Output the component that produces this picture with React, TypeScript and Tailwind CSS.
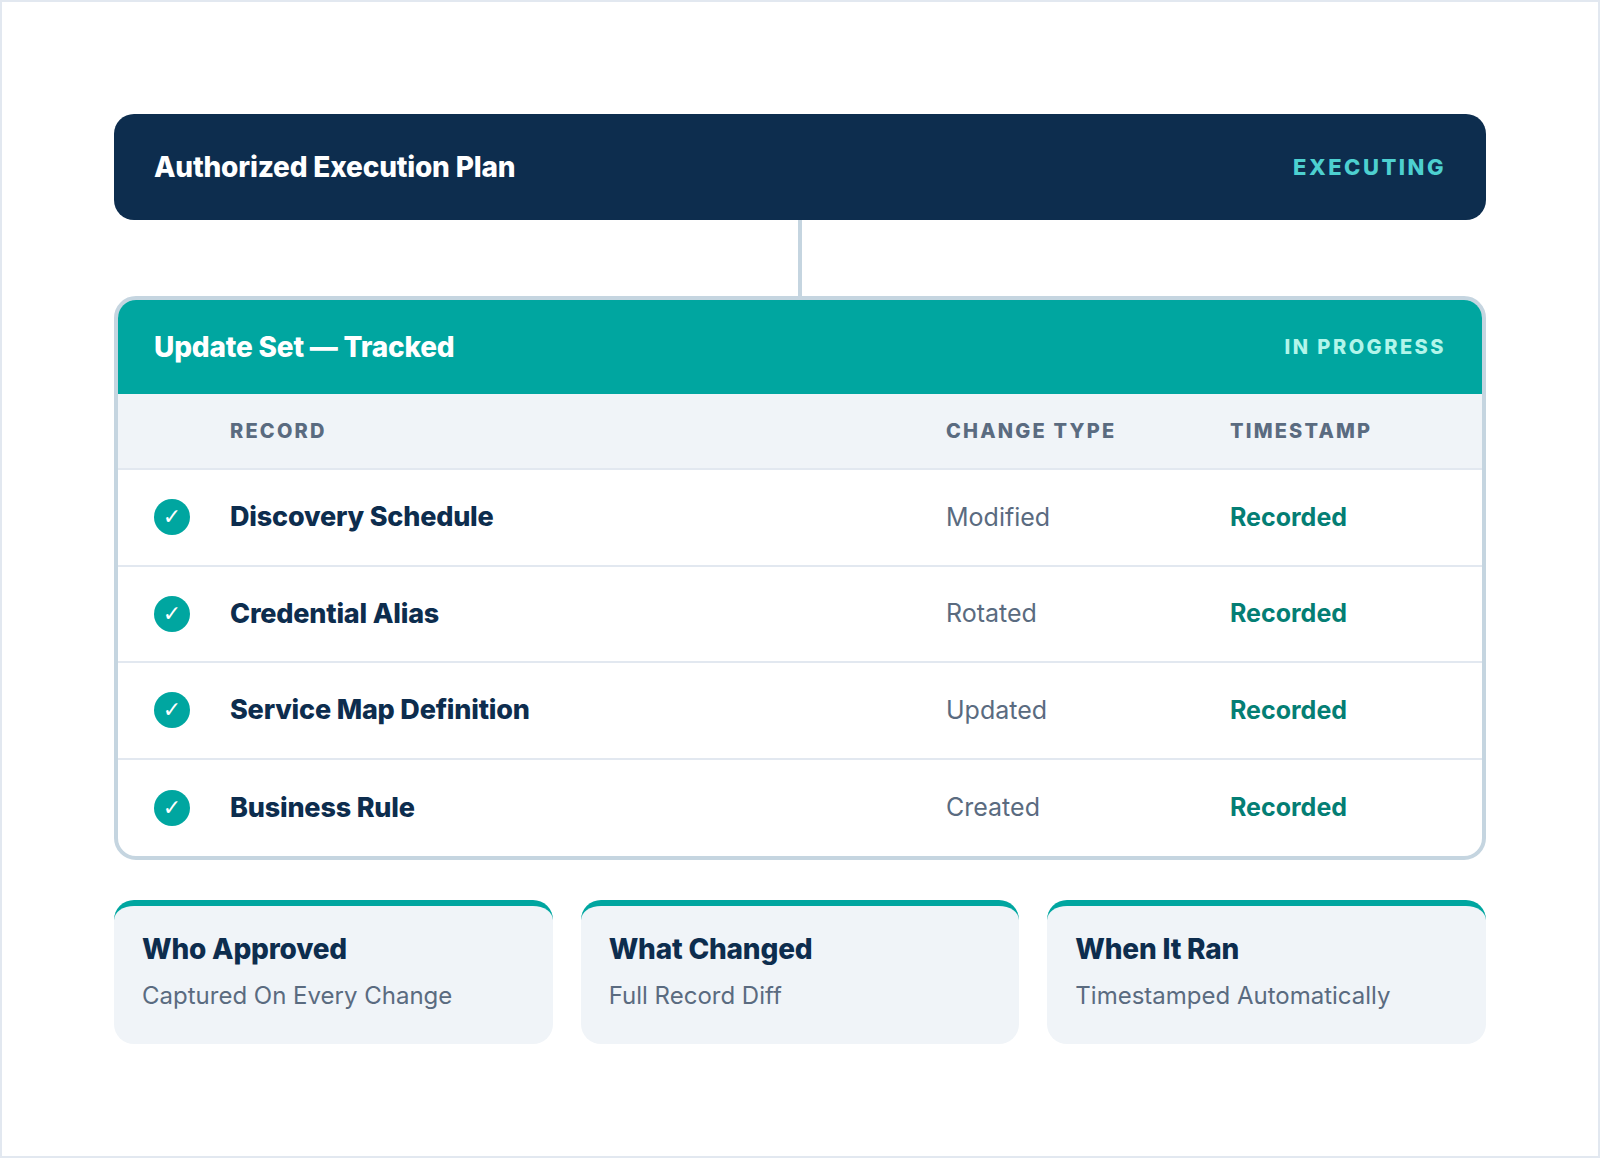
const rows = [
  { name: "Discovery Schedule", change: "Modified" },
  { name: "Credential Alias", change: "Rotated" },
  { name: "Service Map Definition", change: "Updated" },
  { name: "Business Rule", change: "Created" },
];

const notes = [
  { title: "Who Approved", text: "Captured On Every Change" },
  { title: "What Changed", text: "Full Record Diff" },
  { title: "When It Ran", text: "Timestamped Automatically" },
];

export default function App() {
  return (
    <div className="h-[1158px] border-2 border-[#e2e8f0] bg-white px-[112px] py-[112px] font-['Inter',sans-serif]">
      <div className="flex h-[106px] items-center justify-between rounded-[20px] bg-[#0d2d4e] px-10">
        <div className="text-[28px] font-extrabold tracking-[-0.2px] text-white">Authorized Execution Plan</div>
        <div className="text-[22px] font-extrabold tracking-[2.5px] text-[#4dd0d0]">EXECUTING</div>
      </div>

      <div className="mx-auto h-[76px] w-1 bg-[#c5d5e0]" />

      <div className="overflow-hidden rounded-[22px] border-4 border-[#c5d5e0]">
        <div className="flex h-[94px] items-center justify-between bg-[#00a6a0] pl-9 pr-9">
          <div className="text-[28px] font-extrabold tracking-[-0.2px] text-white">Update Set — Tracked</div>
          <div className="text-[20px] font-extrabold tracking-[2.5px] text-[#b2f5ea]">IN PROGRESS</div>
        </div>

        <div className="grid h-[76px] grid-cols-[76px_716px_284px_1fr] items-center border-b-2 border-[#e2e8f0] bg-[#f0f4f8] px-9 text-[20px] font-extrabold tracking-[2.2px] text-[#5a6b80]">
          <div />
          <div>RECORD</div>
          <div>CHANGE TYPE</div>
          <div>TIMESTAMP</div>
        </div>

        {rows.map((row, i) => (
          <div
            key={row.name}
            className={`grid h-[96.5px] grid-cols-[76px_716px_284px_1fr] items-center px-9 ${i < 3 ? "border-b-2 border-[#e2e8f0]" : ""}`}
          >
            <div className="flex h-9 w-9 items-center justify-center rounded-full bg-[#00a6a0] font-['DejaVu_Sans',sans-serif] text-[22px] font-bold leading-none text-white">
              ✓
            </div>
            <div className="text-[27px] font-extrabold tracking-[-0.2px] text-[#0d2d4e]">{row.name}</div>
            <div className="text-[25px] text-[#5a6b80]">{row.change}</div>
            <div className="text-[25px] font-bold text-[#047e74]">Recorded</div>
          </div>
        ))}
      </div>

      <div className="mt-10 grid grid-cols-3 gap-7">
        {notes.map((note) => (
          <div key={note.title} className="h-36 rounded-[20px] border-t-[6px] border-[#00a6a0] bg-[#f0f4f8] px-7 pt-[22px]">
            <div className="text-[28px] font-extrabold tracking-[-0.2px] text-[#0d2d4e]">{note.title}</div>
            <div className="mt-2 text-[24px] text-[#5a6b80]">{note.text}</div>
          </div>
        ))}
      </div>
    </div>
  );
}
